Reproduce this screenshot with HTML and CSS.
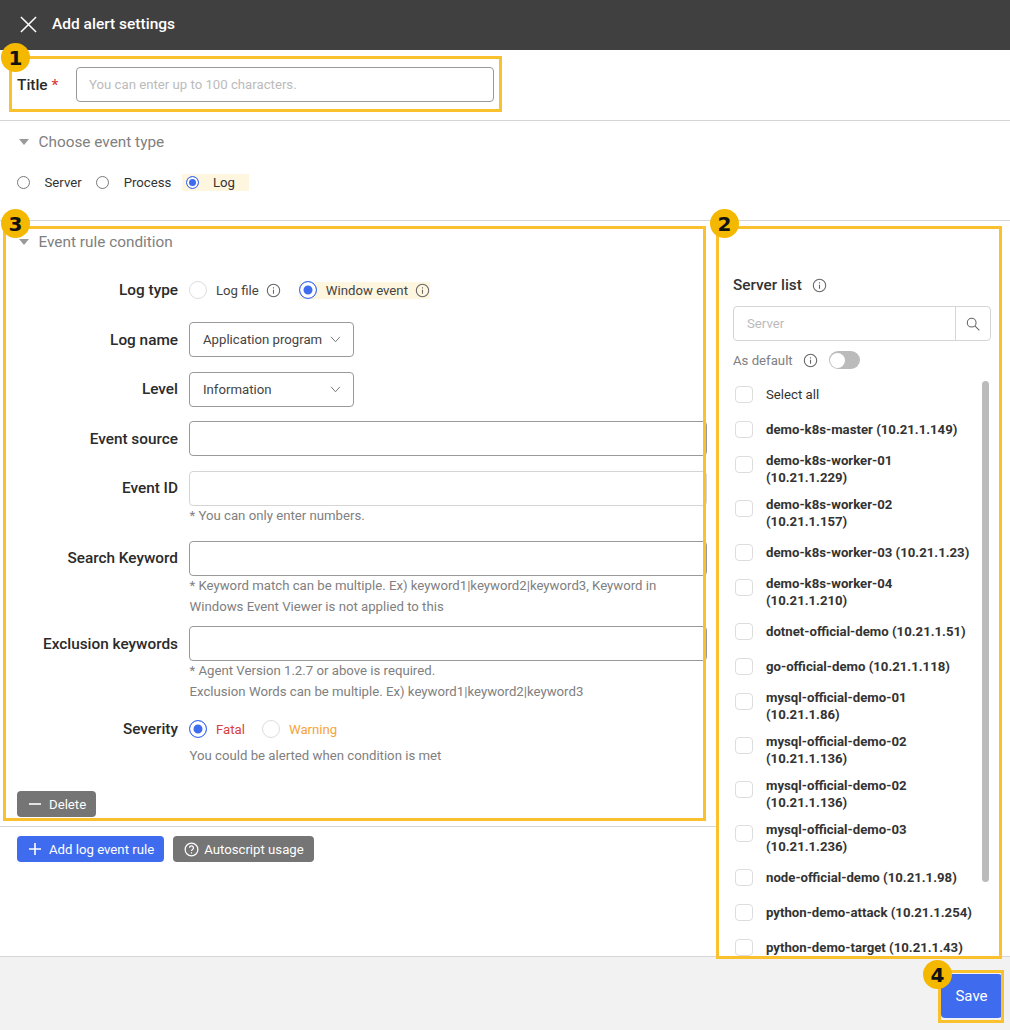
FILE: index.html
```html
<!DOCTYPE html>
<html lang="en">
<head>
  <meta charset="UTF-8">
  <meta name="viewport" content="width=device-width, initial-scale=1.0">
  <title>Add alert settings</title>
  <link rel="stylesheet" href="styles.css">
</head>
<body>
  <div class="app">
    <header class="topbar">
      <svg class="close-icon" viewBox="0 0 18 18"><path d="M1 1l16 16M17 1L1 17"/></svg>
      <span class="topbar-title">Add alert settings</span>
    </header>

    <section class="title-row">
      <label class="title-label">Title <span class="required">*</span></label>
      <div class="input title-input"><span class="placeholder">You can enter up to 100 characters.</span></div>
    </section>

    <section class="event-type">
      <h2 class="section-head"><span class="caret"></span>Choose event type</h2>
      <div class="type-options">
        <span class="radio-sm"></span><span class="type-text">Server</span>
        <span class="radio-sm"></span><span class="type-text">Process</span>
        <span class="type-picked"><span class="radio-sm on"></span><span class="type-text">Log</span></span>
      </div>
    </section>

    <main class="content">
      <div class="rule-pane">
        <h2 class="section-head"><span class="caret"></span>Event rule condition</h2>

        <div class="form-row log-type-row">
          <span class="form-label">Log type</span>
          <div class="radio-line">
            <span class="radio"></span><span class="radio-text">Log file</span>
            <svg class="info" viewBox="0 0 16 16"><circle cx="8" cy="8" r="6.6"/><path d="M8 7.2v4.2M8 4.4v1.4"/></svg>
            <span class="picked">
              <span class="radio on"></span><span class="radio-text">Window event</span>
              <svg class="info" viewBox="0 0 16 16"><circle cx="8" cy="8" r="6.6"/><path d="M8 7.2v4.2M8 4.4v1.4"/></svg>
            </span>
          </div>
        </div>

        <div class="form-row">
          <span class="form-label">Log name</span>
          <div class="input select"><span>Application program</span><svg class="chevron" viewBox="0 0 12 8"><path d="M1 1l5 5.6L11 1"/></svg></div>
        </div>

        <div class="form-row">
          <span class="form-label">Level</span>
          <div class="input select"><span>Information</span><svg class="chevron" viewBox="0 0 12 8"><path d="M1 1l5 5.6L11 1"/></svg></div>
        </div>

        <div class="form-row">
          <span class="form-label">Event source</span>
          <div class="input"></div>
        </div>

        <div class="form-row">
          <span class="form-label">Event ID</span>
          <div class="input light"></div>
        </div>
        <p class="hint">* You can only enter numbers.</p>

        <div class="form-row keyword-row">
          <span class="form-label">Search Keyword</span>
          <div class="input"></div>
        </div>
        <p class="hint">* Keyword match can be multiple. Ex) keyword1|keyword2|keyword3, Keyword in<br>Windows Event Viewer is not applied to this</p>

        <div class="form-row exclusion-row">
          <span class="form-label">Exclusion keywords</span>
          <div class="input"></div>
        </div>
        <p class="hint">* Agent Version 1.2.7 or above is required.<br>Exclusion Words can be multiple. Ex) keyword1|keyword2|keyword3</p>

        <div class="form-row severity-row">
          <span class="form-label">Severity</span>
          <div class="radio-line">
            <span class="radio on"></span><span class="radio-text fatal">Fatal</span>
            <span class="radio"></span><span class="radio-text warning">Warning</span>
          </div>
        </div>
        <p class="hint severity-hint">You could be alerted when condition is met</p>

        <button class="btn gray delete-btn" type="button">
          <svg class="btn-icon" viewBox="0 0 12 12"><path d="M0 6h12"/></svg>Delete
        </button>

        <div class="rule-actions">
          <button class="btn blue" type="button">
            <svg class="btn-icon" viewBox="0 0 12 12"><path d="M0 6h12M6 0v12"/></svg>Add log event rule
          </button>
          <button class="btn gray" type="button">
            <svg class="help-icon" viewBox="0 0 16 16"><circle cx="8" cy="8" r="6.8"/><path d="M5.9 6.2a2.1 2.1 0 1 1 3.2 1.8c-.7.4-1.1.8-1.1 1.6M8 11v1.2"/></svg>Autoscript usage
          </button>
        </div>
      </div>

      <aside class="server-pane">
        <div class="server-head">
          <span>Server list</span>
          <svg class="info" viewBox="0 0 16 16"><circle cx="8" cy="8" r="6.6"/><path d="M8 7.2v4.2M8 4.4v1.4"/></svg>
        </div>
        <div class="server-search">
          <span class="placeholder">Server</span>
          <span class="search-btn"><svg viewBox="0 0 16 16"><circle cx="6.5" cy="6.5" r="5"/><path d="M10.2 10.2l5 5"/></svg></span>
        </div>
        <div class="default-row">
          <span>As default</span>
          <svg class="info" viewBox="0 0 16 16"><circle cx="8" cy="8" r="6.6"/><path d="M8 7.2v4.2M8 4.4v1.4"/></svg>
          <span class="toggle"><span class="knob"></span></span>
        </div>
        <div class="server-list">
          <div class="scroll-thumb"></div>
          <div class="server-item plain"><span class="check"></span><span>Select all</span></div>
          <div class="server-item"><span class="check"></span><span>demo-k8s-master (10.21.1.149)</span></div>
          <div class="server-item"><span class="check"></span><span>demo-k8s-worker-01<br>(10.21.1.229)</span></div>
          <div class="server-item"><span class="check"></span><span>demo-k8s-worker-02<br>(10.21.1.157)</span></div>
          <div class="server-item"><span class="check"></span><span>demo-k8s-worker-03 (10.21.1.23)</span></div>
          <div class="server-item"><span class="check"></span><span>demo-k8s-worker-04<br>(10.21.1.210)</span></div>
          <div class="server-item"><span class="check"></span><span>dotnet-official-demo (10.21.1.51)</span></div>
          <div class="server-item"><span class="check"></span><span>go-official-demo (10.21.1.118)</span></div>
          <div class="server-item"><span class="check"></span><span>mysql-official-demo-01<br>(10.21.1.86)</span></div>
          <div class="server-item"><span class="check"></span><span>mysql-official-demo-02<br>(10.21.1.136)</span></div>
          <div class="server-item"><span class="check"></span><span>mysql-official-demo-02<br>(10.21.1.136)</span></div>
          <div class="server-item"><span class="check"></span><span>mysql-official-demo-03<br>(10.21.1.236)</span></div>
          <div class="server-item"><span class="check"></span><span>node-official-demo (10.21.1.98)</span></div>
          <div class="server-item"><span class="check"></span><span>python-demo-attack (10.21.1.254)</span></div>
          <div class="server-item"><span class="check"></span><span>python-demo-target (10.21.1.43)</span></div>
        </div>
      </aside>
    </main>

    <footer class="footer">
      <button class="save-btn" type="button">Save</button>
    </footer>

    <div class="mark mark-1"></div>
    <div class="mark mark-2"></div>
    <div class="mark mark-3"></div>
    <div class="mark mark-4"></div>
    <span class="badge badge-1">1</span>
    <span class="badge badge-2">2</span>
    <span class="badge badge-3">3</span>
    <span class="badge badge-4">4</span>
  </div>
</body>
</html>
```

FILE: styles.css
```css
* { box-sizing: border-box; }
body { margin: 0; font-family: Roboto, "Liberation Sans", sans-serif; color: #333; background: #fff; }
h2, p { margin: 0; }
button { font-family: inherit; border: 0; cursor: pointer; }
svg { display: block; flex: none; fill: none; }

.app { position: relative; display: flex; flex-direction: column; height: 1030px; overflow: hidden; }

.topbar { display: flex; align-items: center; flex: none; height: 50px; padding: 0 0 2px 20px; background: #404040; color: #fff; }
.close-icon { width: 17px; height: 17px; margin-right: 15px; stroke: #fff; stroke-width: 1.6; }
.topbar-title { font-size: 15.5px; font-weight: 500; }

.title-row { display: flex; align-items: center; flex: none; height: 71px; padding: 0 0 1px 17px; border-bottom: 1px solid #d5d5d5; }
.title-label { width: 59px; font-size: 15.4px; font-weight: 500; color: #2b2b2b; }
.required { color: #d9413b; }
.title-input { width: 418px; padding-bottom: 2px; }
.placeholder { font-size: 13.2px; color: #bbb; }

.input { display: flex; align-items: center; height: 35px; padding: 0 12px; background: #fff; border: 1px solid #999; border-radius: 4px; font-size: 13.2px; }
.input.light { border-color: #d5d5d5; }
.select { justify-content: space-between; width: 165px; padding: 0 12.5px 0 13px; color: #444; }
.chevron { width: 11px; height: 7px; stroke: #666; stroke-width: 1; }

.event-type { flex: none; height: 100px; border-bottom: 1px solid #d5d5d5; }
.section-head { display: flex; align-items: center; height: 20px; font-size: 15.35px; font-weight: 400; color: #808080; }
.event-type .section-head { margin-top: 11px; padding-left: 19px; }
.caret { width: 0; height: 0; margin-right: 9.5px; border-style: solid; border-width: 6px 5.5px 0; border-color: #999 transparent transparent; }
.type-options { display: flex; align-items: center; margin-top: 22px; padding-left: 17px; font-size: 13.2px; color: #333; }
.type-text { margin: 0 14.5px; }
.type-picked { display: flex; align-items: center; height: 17px; margin-left: -4px; padding-left: 4px; background: #fff6e0; }
.type-picked .type-text { margin: 0 14px; }
.radio-sm { flex: none; width: 13px; height: 13px; background: #fff; border: 1px solid #777; border-radius: 50%; }
.radio-sm.on { border-color: #3f6bef; box-shadow: inset 0 0 0 2px #fff; background: #3f6bef; }

.content { display: flex; flex: 1; min-height: 0; }
.rule-pane { flex: none; width: 717px; padding: 11px 10px 0 0; }
.rule-pane .section-head { padding-left: 19px; margin-bottom: 27px; }

.form-row { display: grid; grid-template-columns: 178px 1fr; column-gap: 11px; align-items: center; margin-bottom: 14.5px; }
.form-label { font-size: 15.35px; font-weight: 500; color: #2b2b2b; text-align: right; }
.log-type-row { height: 22px; margin-bottom: 21px; }
.keyword-row { margin-top: 15px; margin-bottom: 0; }
.keyword-row .form-label { padding-bottom: 1px; }
.exclusion-row { margin-top: 9px; margin-bottom: 0; }
.radio-line { display: flex; align-items: center; font-size: 13.2px; color: #444; }
.radio { flex: none; width: 18px; height: 18px; background: #fff; border: 1px solid #ddd; border-radius: 50%; }
.radio.on { border-color: #3f6bef; background: #3f6bef; box-shadow: inset 0 0 0 3.5px #fff; }
.radio-text { margin-left: 9px; }
.radio-line .info { margin-left: 7px; }
.picked { display: flex; align-items: center; height: 17px; margin-left: 18px; background: #fff6e0; }
.fatal { color: #d9413b; margin-right: 17px; }
.warning { color: #f5a33b; }
.info { width: 15px; height: 15px; stroke: #666; stroke-width: 1.15; }

.hint { margin-left: 189.5px; font-size: 13.2px; line-height: 20.5px; color: #808080; }
.form-row + .hint { margin-top: -14.5px; }
.keyword-row + .hint, .exclusion-row + .hint { margin-top: 0; }
.severity-row { height: 22px; margin-top: 16px; margin-bottom: 6px; }
.form-row.severity-row + .hint { margin-top: 0; }

.btn { display: inline-flex; align-items: center; height: 26px; padding: 0 10px 0 12px; border-radius: 4px; color: #fff; font-size: 13.2px; }
.btn.gray { background: #757575; }
.btn.blue { background: #3f6bef; }
.btn-icon { width: 12px; height: 12px; margin-right: 8px; stroke: #fff; stroke-width: 1.6; }
.help-icon { width: 15px; height: 15px; margin-right: 5.5px; stroke: #fff; stroke-width: 1.3; }
.delete-btn { margin: 24.5px 0 0 17px; }
.rule-actions { display: flex; gap: 9px; margin: 9px -10px 0 0; padding: 9px 0 0 17px; border-top: 1px solid #d5d5d5; }
.rule-actions .btn:last-child { padding-left: 10.5px; }

.server-pane { flex: 1; min-width: 0; padding: 55px 19px 0 16px; overflow: hidden; }
.server-head { display: flex; align-items: center; gap: 10.5px; height: 18px; font-size: 15.35px; font-weight: 500; color: #333; }
.server-search { display: flex; align-items: center; justify-content: space-between; height: 35px; margin-top: 12px; padding-left: 13px; border: 1px solid #d5d5d5; border-radius: 4px; }
.search-btn { display: flex; align-items: center; justify-content: center; width: 35px; height: 33px; border-left: 1px solid #d5d5d5; }
.search-btn svg { width: 14px; height: 14px; stroke: #666; stroke-width: 1.2; }
.default-row { display: flex; align-items: center; height: 18px; margin-top: 10px; font-size: 13.2px; color: #808080; }
.default-row .info { margin-left: 10px; }
.toggle { display: flex; align-items: center; width: 31px; height: 18px; margin-left: 11px; padding-left: 1px; background: #bbb; border-radius: 9px; }
.knob { width: 15px; height: 15px; background: #fff; border-radius: 50%; }

.server-list { position: relative; margin-top: 8px; }
.scroll-thumb { position: absolute; top: 4px; right: 2px; width: 7px; height: 501px; background: #bbb; border-radius: 4px; }
.server-item { display: flex; align-items: center; min-height: 35px; padding: 4.5px 0 4.5px 2px; font-size: 13.2px; font-weight: 700; line-height: 17.5px; color: #333; }
.server-item.plain { font-weight: 400; }
.check { flex: none; align-self: flex-start; width: 17.5px; height: 16.5px; margin: 4.5px 13.5px 0 0; background: #fff; border: 1px solid #ddd; border-radius: 4px; }

.footer { display: flex; justify-content: flex-end; flex: none; height: 74px; padding: 17px 8px 0 0; background: #f2f2f2; border-top: 1px solid #d5d5d5; }
.save-btn { width: 61px; height: 44px; background: #3f6bef; border-radius: 4px; color: #fff; font-size: 15px; }

.mark { position: absolute; border: 3px solid #fbc02d; pointer-events: none; }
.mark-1 { left: 9px; top: 56px; width: 493px; height: 56px; }
.mark-2 { left: 716px; top: 226px; width: 286px; height: 733px; }
.mark-3 { left: 3px; top: 226px; width: 703px; height: 595px; }
.mark-4 { left: 938px; top: 970px; width: 66px; height: 53px; }

.badge { position: absolute; display: flex; align-items: center; justify-content: center; width: 29px; height: 29px; background: #f5b800; border-radius: 50%; color: #111; font-family: "DejaVu Sans", sans-serif; font-size: 20px; font-weight: 700; }
.badge-1 { left: 1px; top: 43px; }
.badge-2 { left: 710px; top: 209px; }
.badge-3 { left: 1px; top: 209px; }
.badge-4 { left: 923px; top: 960px; }
```
